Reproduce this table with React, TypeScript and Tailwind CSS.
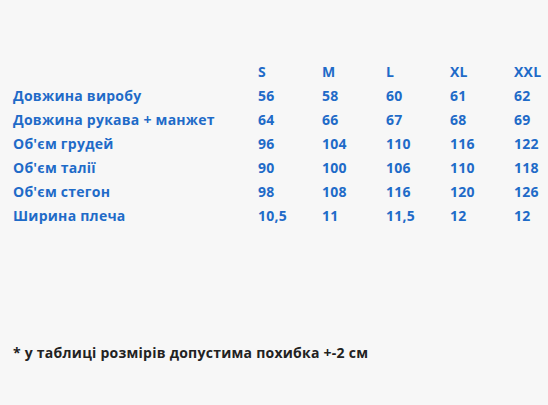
const sizes = ["S", "M", "L", "XL", "XXL"];

const rows: { label: string; values: string[] }[] = [
  { label: "Довжина виробу", values: ["56", "58", "60", "61", "62"] },
  { label: "Довжина рукава + манжет", values: ["64", "66", "67", "68", "69"] },
  { label: "Об'єм грудей", values: ["96", "104", "110", "116", "122"] },
  { label: "Об'єм талії", values: ["90", "100", "106", "110", "118"] },
  { label: "Об'єм стегон", values: ["98", "108", "116", "120", "126"] },
  { label: "Ширина плеча", values: ["10,5", "11", "11,5", "12", "12"] },
];

export default function App() {
  return (
    <div
      className="h-[405px] w-[548px] overflow-hidden bg-[#f7f7f7] pl-[13px] pt-[60px] tracking-[0.25px]"
      style={{ fontFamily: '"Open Sans", "Noto Sans", sans-serif' }}
    >
      <div className="grid grid-cols-[245px_64px_64px_64px_64px_auto] text-[14px] font-bold leading-6 text-[#1f6bc8]">
        <div></div>
        {sizes.map((s) => (
          <div key={s}>{s}</div>
        ))}
        {rows.map((row) => (
          <div key={row.label} className="contents">
            <div>{row.label}</div>
            {row.values.map((v, i) => (
              <div key={i}>{v}</div>
            ))}
          </div>
        ))}
      </div>
      <p className="mt-[113px] text-[14px] font-bold leading-6 text-[#222]">
        * у таблиці розмірів допустима похибка +-2 см
      </p>
    </div>
  );
}
